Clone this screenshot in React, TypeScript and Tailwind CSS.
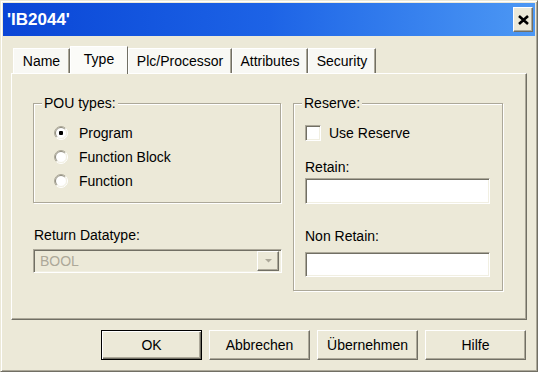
import React from "react";

const sunken =
  "border border-t-[#aca899] border-l-[#aca899] border-r-white border-b-white shadow-[inset_1px_1px_0_#716f64,inset_-1px_-1px_0_#f1efe2]";
const raised =
  "border border-t-white border-l-white border-r-[#716f64] border-b-[#716f64] shadow-[inset_-1px_-1px_0_#aca899]";
const etched = "border border-[#aca899] shadow-[inset_1px_1px_0_#fff,1px_1px_0_#fff]";

interface RadioProps {
  label: string;
  checked?: boolean;
}

const Radio: React.FC<RadioProps> = ({ label, checked }) => (
  <div className="flex h-[24px] items-center gap-[11px]">
    <svg width="14" height="14" viewBox="0 0 14 14" className="shrink-0">
      <circle cx="7" cy="7" r="6" fill="#fff" />
      {/* outer ring: shadow top-left, light bottom-right */}
      <path d="M11.6 2.4 A6.5 6.5 0 0 0 2.4 11.6" stroke="#aca899" fill="none" />
      <path d="M11.6 2.4 A6.5 6.5 0 0 1 2.4 11.6" stroke="#fff" fill="none" />
      <path d="M10.9 3.1 A5.5 5.5 0 0 0 3.1 10.9" stroke="#8f8c7d" fill="none" />
      <path d="M10.9 3.1 A5.5 5.5 0 0 1 3.1 10.9" stroke="#f1efe2" fill="none" />
      {checked && <rect x="5" y="5" width="4" height="4" rx="1" fill="#000" />}
    </svg>
    <span>{label}</span>
  </div>
);

const GroupBox: React.FC<{ title: string; className: string; children: React.ReactNode }> = ({
  title,
  className,
  children,
}) => (
  <div className={`relative ${etched} ${className}`}>
    <span className="absolute -top-[9px] left-[8px] bg-[#ece9d8] px-[2px] leading-[16px]">{title}</span>
    {children}
  </div>
);

const tabs = [
  { name: "Name", w: "w-[57px]" },
  { name: "Type", w: "w-[58px]", active: true },
  { name: "Plc/Processor", w: "w-[104px]" },
  { name: "Attributes", w: "w-[76px]" },
  { name: "Security", w: "w-[68px]" },
];

export default function App() {
  return (
    <div
      className="flex h-[372px] w-[538px] flex-col border border-t-[#ece9d8] border-l-[#ece9d8] border-r-[#716f64] border-b-[#716f64] bg-[#ece9d8] p-[2px] text-[14px] text-black shadow-[inset_1px_1px_0_#fff,inset_-1px_-1px_0_#aca899]"
      style={{ fontFamily: '"Liberation Sans", Arial, sans-serif' }}
    >
      {/* Title bar */}
      <div className="flex h-[33px] items-center justify-between bg-gradient-to-r from-[#0a45d6] via-[#1d63e6] to-[#4d98f4] pl-[4px] pr-[2px]">
        <span className="text-[17px] font-bold leading-none text-white">'IB2044'</span>
        <button className={`flex h-[25px] w-[20px] items-center justify-center bg-[#ece9d8] ${raised}`}>
          <svg width="11" height="10" viewBox="0 0 11 10">
            <path d="M1 1 L10 9 M10 1 L1 9" stroke="#000" strokeWidth="2.6" />
          </svg>
        </button>
      </div>

      <div className="flex flex-col px-[8px]">
        {/* Tabs */}
        <div className="mt-[10px] flex h-[27px] items-end pl-[2px]">
          {tabs.map((t) =>
            t.active ? (
              <div
                key={t.name}
                className={`relative z-10 -mb-px flex h-[28px] ${t.w} items-center justify-center border-t border-l border-t-white border-l-white border-r border-r-[#716f64] bg-[#fbfbf8] pb-[2px]`}
              >
                {t.name}
              </div>
            ) : (
              <div
                key={t.name}
                className={`flex h-[25px] ${t.w} items-center justify-center border-t border-l border-t-white border-l-white border-r border-r-[#716f64] bg-[#f8f8f4] shadow-[inset_-1px_0_0_#aca899] pt-[1px]`}
              >
                {t.name}
              </div>
            )
          )}
        </div>

        {/* Tab panel */}
        <div className={`flex h-[247px] bg-[#ece9d8] pl-[21px] pt-[29px] ${raised}`}>
          <div className="flex w-[248px] flex-col">
            <GroupBox title="POU types:" className="h-[100px] w-[248px] pl-[20px] pt-[17px]">
              <Radio label="Program" checked />
              <Radio label="Function Block" />
              <Radio label="Function" />
            </GroupBox>
            <span className="mt-[24px] pl-px leading-[16px]">Return Datatype:</span>
            <div className={`mt-[6px] flex h-[24px] w-[249px] items-center justify-between bg-[#ece9d8] ${sunken} p-[2px]`}>
              <span className="pl-[4px] text-[#aca899]">BOOL</span>
              <div className={`flex h-[20px] w-[22px] items-center justify-center bg-[#ece9d8] ${raised}`}>
                <svg width="9" height="6" viewBox="0 0 9 6">
                  <path d="M1 1 H8 L4.5 4.5 Z" fill="#aca899" />
                </svg>
              </div>
            </div>
          </div>

          <GroupBox title="Reserve:" className="ml-[12px] flex h-[188px] w-[210px] flex-col pl-[11px] pt-[21px]">
            <div className="flex h-[16px] items-center gap-[8px]">
              <span className={`h-[16px] w-[16px] bg-white ${sunken}`} />
              <span>Use Reserve</span>
            </div>
            <span className="mt-[18px] leading-[16px]">Retain:</span>
            <div className={`mt-[3px] h-[26px] w-[185px] bg-white ${sunken}`} />
            <span className="mt-[24px] leading-[16px]">Non Retain:</span>
            <div className={`mt-[8px] h-[25px] w-[185px] bg-white ${sunken}`} />
          </GroupBox>
        </div>

        {/* Buttons */}
        <div className="mt-[10px] flex justify-end gap-[7px] pr-px">
          <button className="flex h-[30px] w-[101px] items-center justify-center border border-black bg-[#ece9d8] shadow-[inset_1px_1px_0_#fff,inset_-1px_-1px_0_#716f64,inset_-2px_-2px_0_#aca899]">
            OK
          </button>
          <button className={`flex h-[30px] w-[101px] items-center justify-center bg-[#ece9d8] ${raised}`}>
            Abbrechen
          </button>
          <button className={`flex h-[30px] w-[101px] items-center justify-center bg-[#ece9d8] ${raised}`}>
            Übernehmen
          </button>
          <button className={`flex h-[30px] w-[101px] items-center justify-center bg-[#ece9d8] ${raised}`}>
            Hilfe
          </button>
        </div>
      </div>
    </div>
  );
}
